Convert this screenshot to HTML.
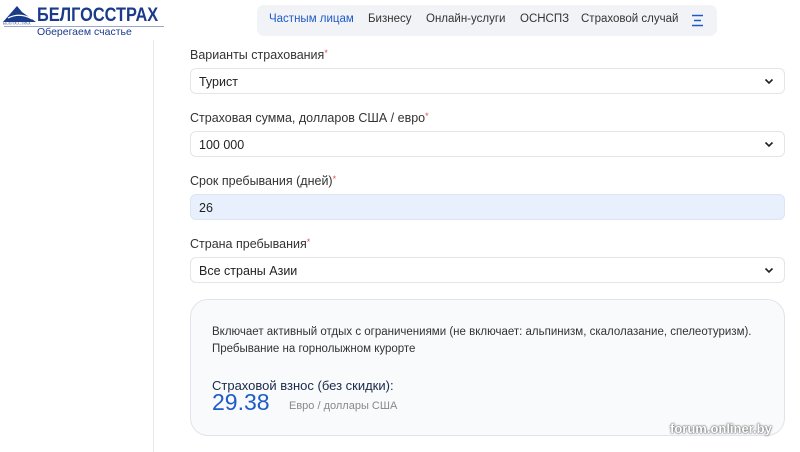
<!DOCTYPE html>
<html><head><meta charset="utf-8"><style>
*{margin:0;padding:0;box-sizing:border-box}
body{width:800px;height:452px;overflow:hidden;background:#fff;font-family:"Liberation Sans","Noto Sans CJK SC",sans-serif;position:relative;color:#222}
.vl{position:absolute;left:153px;top:40px;width:1px;height:412px;background:#e6e8ec}
.logo{position:absolute;left:2px;top:3px}
.brand{position:absolute;left:37px;top:5px;font-family:"Liberation Sans",sans-serif;font-weight:bold;font-size:19px;color:#1a3a8a;transform:scaleX(0.86);transform-origin:left top;white-space:nowrap}
.uline{position:absolute;left:4px;top:26px;width:160px;height:1px;background:#9aa7c8}
.slogan{position:absolute;left:37px;top:26px;font-size:10.5px;color:#1a3a8a}
.nav{position:absolute;left:257px;top:5px;width:460px;height:31px;background:#f1f3f7;border-radius:7px;font-size:11.5px;color:#333}
.nav span{position:absolute;top:8px;white-space:nowrap}
.lbl{position:absolute;left:190px;font-size:12.5px;color:#333}
.lbl i{font-style:normal;color:#e05050;font-size:9px;vertical-align:top}
.f{position:absolute;left:190px;width:595px;height:26px;border:1px solid #e2e5ea;border-radius:6px;font-size:12.5px;padding:6px 8px;color:#222}
.f svg{position:absolute;right:10px;top:9px}
.box{position:absolute;left:190px;top:299px;width:595px;height:137px;border:1px solid #e0e4ea;border-radius:18px;background:#f8fafc}
.t{position:absolute;left:212px;font-size:11.5px;color:#333}
</style></head><body>
<div class="vl"></div>
<svg class="logo" width="36" height="22" viewBox="0 0 36 22"><path d="M1 19 L15 3 L20 9 L34 19 Z" fill="#1a3a8a"/><path d="M6 15 Q18 9 30 16" stroke="#fff" stroke-width="1.2" fill="none"/><text x="1" y="21.5" font-size="4" fill="#1a3a8a" font-family="Liberation Serif">БЕЛГОССТРАХ</text></svg>
<div class="brand">БЕЛГОССТРАХ</div>
<div class="uline"></div>
<div class="slogan">Оберегаем счастье</div>
<div class="nav">
<span style="left:12px;color:#1f5bc7">Частным лицам</span>
<span style="left:111px">Бизнесу</span>
<span style="left:169px">Онлайн-услуги</span>
<span style="left:263px">ОСНСПЗ</span>
<span style="left:324px">Страховой случай</span>
<svg style="position:absolute;left:434px;top:9px" width="13" height="13" viewBox="0 0 13 13"><path d="M1 1.5H12M3 6.5H10M1 11.5H12" stroke="#1f5bc7" stroke-width="1.5"/></svg>
</div>
<div class="lbl" style="top:48px">Варианты страхования<i>*</i></div>
<div class="f" style="top:68px">Турист<svg width="10" height="7" viewBox="0 0 10 7"><path d="M1.5 1.5L5 5L8.5 1.5" stroke="#222" stroke-width="1.6" fill="none"/></svg></div>
<div class="lbl" style="top:111px">Страховая сумма, долларов США / евро<i>*</i></div>
<div class="f" style="top:131px">100 000<svg width="10" height="7" viewBox="0 0 10 7"><path d="M1.5 1.5L5 5L8.5 1.5" stroke="#222" stroke-width="1.6" fill="none"/></svg></div>
<div class="lbl" style="top:174px">Срок пребывания (дней)<i>*</i></div>
<div class="f" style="top:194px;background:#e9f0fd;border-color:#dde5f2">26</div>
<div class="lbl" style="top:237px">Страна пребывания<i>*</i></div>
<div class="f" style="top:257px">Все страны Азии<svg width="10" height="7" viewBox="0 0 10 7"><path d="M1.5 1.5L5 5L8.5 1.5" stroke="#222" stroke-width="1.6" fill="none"/></svg></div>
<div class="box"></div>
<div class="t" style="top:326px">Включает активный отдых с ограничениями (не включает: альпинизм, скалолазание, спелеотуризм).</div>
<div class="t" style="top:343px">Пребывание на горнолыжном курорте</div>
<div class="t" style="top:378px;font-size:13px;color:#1b2a4a">Страховой взнос (без скидки):</div>
<div class="t" style="top:389px;font-size:23px;color:#1f5bc7">29.38</div>
<div class="t" style="top:400px;left:289px;font-size:11px;color:#888">Евро / доллары США</div>
<div style="position:absolute;left:670px;top:421px;font-size:13px;font-weight:bold;color:#fff;text-shadow:0 0 2px #555,0 0 1px #333">forum.onliner.by</div>
</body></html>
